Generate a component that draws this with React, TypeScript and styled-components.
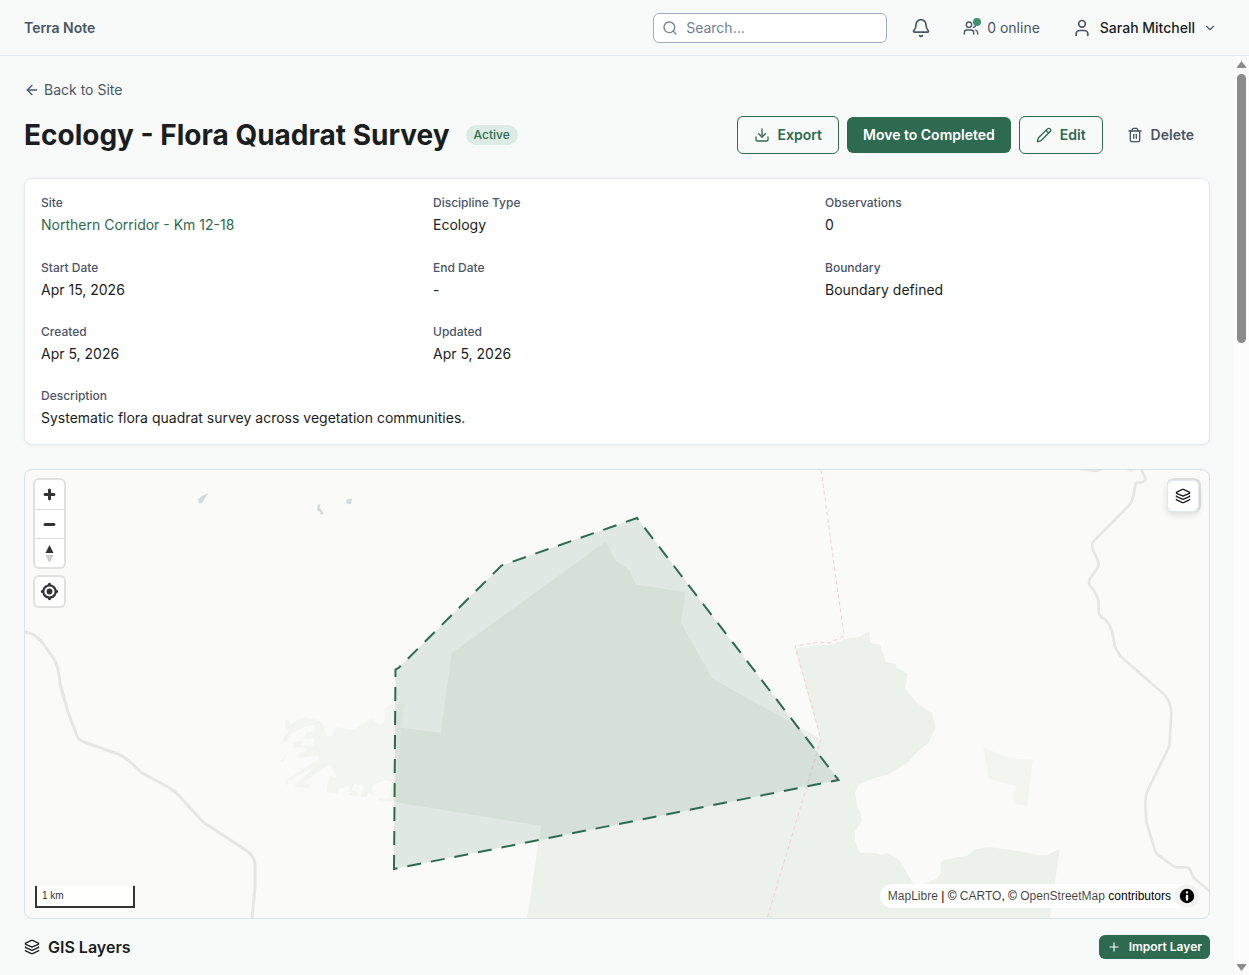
import React from 'react';
import styled, { createGlobalStyle, css } from 'styled-components';
import {
  ArrowLeft,
  Bell,
  ChevronDown,
  Download,
  Layers,
  Pencil,
  Plus,
  Search,
  Trash2,
  User,
  Users,
} from 'lucide-react';

const color = {
  page: '#f8faf9',
  surface: '#ffffff',
  border: '#e2e8f0',
  ink: '#1a1d21',
  muted: '#4a5568',
  faint: '#718096',
  green: '#2d6a4f',
  greenSoft: '#dcebe3',
  online: '#40916c',
  control: '#333333',
};

const GlobalStyle = createGlobalStyle`
  *, *::before, *::after { box-sizing: border-box; }
  body {
    margin: 0;
    background: ${color.page};
    color: ${color.ink};
    font-family: Inter, "Liberation Sans", sans-serif;
    font-size: 14px;
    line-height: 20px;
  }
  button, input { font: inherit; }
  h1, h2, dl, dd { margin: 0; }
  svg { display: block; flex-shrink: 0; }
`;

const Shell = styled.div`
  display: flex;
  flex-direction: column;
  height: 100vh;
`;

const TopBar = styled.header`
  display: flex;
  align-items: center;
  justify-content: space-between;
  flex-shrink: 0;
  height: 56px;
  padding: 0 24px;
  border-bottom: 1px solid ${color.border};
`;

const Brand = styled.span`
  color: ${color.muted};
  font-weight: 600;
`;

const TopTools = styled.div`
  display: flex;
  align-items: center;
  gap: 16px;
`;

const SearchField = styled.label`
  display: flex;
  align-items: center;
  gap: 8px;
  width: 234px;
  height: 30px;
  padding: 0 8px;
  border: 1px solid #a0aec0;
  border-radius: 6px;
  background: ${color.surface};
  color: ${color.faint};
`;

const SearchInput = styled.input`
  flex: 1;
  min-width: 0;
  padding: 0;
  border: 0;
  outline: 0;
  background: transparent;
  color: ${color.ink};
  &::placeholder { color: ${color.faint}; opacity: 1; }
`;

const BarButton = styled.button<{ $strong?: boolean }>`
  display: flex;
  align-items: center;
  gap: 8px;
  padding: 8px;
  border: 0;
  background: transparent;
  color: ${(p) => (p.$strong ? color.ink : color.muted)};
  font-weight: ${(p) => (p.$strong ? 500 : 400)};
  cursor: pointer;
  svg { color: ${color.muted}; }
`;

const PresenceIcon = styled.span`
  position: relative;
`;

const PresenceDot = styled.span`
  position: absolute;
  top: -2px;
  right: -2px;
  width: 8px;
  height: 8px;
  border-radius: 50%;
  background: ${color.online};
`;

const Body = styled.div`
  display: flex;
  flex: 1;
  min-height: 0;
`;

const Content = styled.main`
  flex: 1;
  min-width: 0;
  padding: 24px;
  overflow-y: auto;
  scrollbar-width: none;
`;

const ScrollTrack = styled.div`
  display: flex;
  flex-direction: column;
  align-items: center;
  width: 15px;
  padding: 5px 0 4px;
  background: #fcfcfc;
`;

const ScrollThumb = styled.div`
  width: 9px;
  height: 269px;
  margin: 5px 0 auto;
  border-radius: 5px;
  background: #8b8b8b;
`;

const BackLink = styled.a`
  display: inline-flex;
  align-items: center;
  gap: 4px;
  color: ${color.muted};
  text-decoration: none;
  vertical-align: top;
`;

const TitleRow = styled.div`
  display: flex;
  align-items: center;
  justify-content: space-between;
  margin: 16px 0 24px;
`;

const TitleGroup = styled.div`
  display: flex;
  align-items: center;
  gap: 16px;
`;

const Title = styled.h1`
  font-size: 28px;
  line-height: 36px;
  font-weight: 700;
`;

const Badge = styled.span`
  padding: 0 8px;
  border-radius: 10px;
  background: ${color.greenSoft};
  color: ${color.green};
  font-size: 12px;
  font-weight: 500;
`;

const Actions = styled.div`
  display: flex;
  align-items: center;
  gap: 8px;
`;

const variants = {
  outline: css`
    border: 1px solid ${color.green};
    background: transparent;
    color: ${color.green};
  `,
  solid: css`
    border: 0;
    background: ${color.green};
    color: #ffffff;
  `,
  ghost: css`
    border: 0;
    background: transparent;
    color: ${color.muted};
  `,
};

const Button = styled.button<{ $variant: keyof typeof variants; $small?: boolean }>`
  display: inline-flex;
  align-items: center;
  gap: 8px;
  padding: ${(p) => (p.$small ? '2px 8px' : '8px 16px')};
  border-radius: 6px;
  font-size: ${(p) => (p.$small ? 12 : 14)}px;
  font-weight: 600;
  white-space: nowrap;
  cursor: pointer;
  ${(p) => variants[p.$variant]}
`;

const Card = styled.section`
  padding: 16px;
  border: 1px solid ${color.border};
  border-radius: 8px;
  background: ${color.surface};
  box-shadow: 0 1px 3px rgba(0, 0, 0, 0.06);
`;

const Facts = styled.dl`
  display: grid;
  grid-template-columns: repeat(3, 1fr);
  grid-template-rows: 41px 40px 40px;
  gap: 24px;
`;

const Description = styled.dl`
  padding-top: 24px;
`;

const FactLabel = styled.dt`
  margin-bottom: 4px;
  color: ${color.muted};
  font-size: 12px;
  line-height: 16px;
  font-weight: 500;
`;

const FactLink = styled.a`
  color: ${color.green};
  text-decoration: none;
`;

const MapFrame = styled.section`
  position: relative;
  height: 450px;
  margin: 24px 0 16px;
  border: 1px solid #d9e2ec;
  border-radius: 8px;
  background: #fafaf8;
  overflow: hidden;
`;

const MapDrawing = styled.svg`
  width: 100%;
  height: 100%;
`;

const MapTools = styled.div`
  position: absolute;
  top: 10px;
  left: 10px;
  display: flex;
  flex-direction: column;
  gap: 10px;
`;

const ToolGroup = styled.div`
  border-radius: 4px;
  background: ${color.surface};
  box-shadow: 0 0 0 2px rgba(0, 0, 0, 0.1);
`;

const ToolButton = styled.button`
  display: flex;
  width: 29px;
  height: 29px;
  padding: 0;
  border: 0;
  background: transparent;
  cursor: pointer;
  & + & { border-top: 1px solid #dddddd; }
`;

const LayerToggle = styled.button`
  position: absolute;
  top: 10px;
  right: 10px;
  display: flex;
  align-items: center;
  justify-content: center;
  width: 32px;
  height: 32px;
  padding: 0;
  border: 1px solid ${color.border};
  border-radius: 6px;
  background: ${color.surface};
  color: ${color.ink};
  box-shadow: 1px -1px 0 1px rgba(0, 0, 0, 0.1), 0 3px 6px rgba(0, 0, 0, 0.12);
  cursor: pointer;
`;

const ScaleBar = styled.div`
  position: absolute;
  left: 10px;
  bottom: 10px;
  width: 100px;
  padding: 0 5px;
  border: 2px solid ${color.control};
  border-top: 0;
  background: rgba(255, 255, 255, 0.75);
  color: ${color.control};
  font: 10px/20px "Liberation Sans", sans-serif;
`;

const Attribution = styled.div`
  position: absolute;
  right: 10px;
  bottom: 10px;
  display: flex;
  align-items: center;
  gap: 4px;
  padding-left: 8px;
  border-radius: 12px;
  background: ${color.surface};
  color: #000000;
  font: 12px/20px "Liberation Sans", sans-serif;
  a { color: rgba(0, 0, 0, 0.75); text-decoration: none; }
`;

const InfoButton = styled.button`
  width: 24px;
  height: 24px;
  padding: 0;
  border: 0;
  border-radius: 12px;
  background: rgba(0, 0, 0, 0.05);
  cursor: pointer;
`;

const SectionHead = styled.div`
  display: flex;
  align-items: center;
  justify-content: space-between;
`;

const SectionTitle = styled.h2`
  display: flex;
  align-items: center;
  gap: 8px;
  font-size: 16px;
  line-height: 24px;
  font-weight: 600;
`;

const facts = [
  { label: 'Site', value: 'Northern Corridor - Km 12-18', link: true },
  { label: 'Discipline Type', value: 'Ecology' },
  { label: 'Observations', value: '0' },
  { label: 'Start Date', value: 'Apr 15, 2026' },
  { label: 'End Date', value: '-' },
  { label: 'Boundary', value: 'Boundary defined' },
  { label: 'Created', value: 'Apr 5, 2026' },
  { label: 'Updated', value: 'Apr 5, 2026' },
];

function SurveyMap() {
  return (
    <MapDrawing viewBox="25 470 1184 448" preserveAspectRatio="xMidYMid slice" aria-hidden="true">
      {/* Scrub */}
      <g fill="#f3f5f1">
        <path
          transform="translate(270 500) scale(0.33333)"
          fillRule="evenodd"
          d="M45 657 60 664 60 674 80 660 108 651 155 665 173 708 187 708 196 681 250 690 290 662 307 657 325 674 342 668 345 645 342 628 360 614 404 610 393 683 372 907 325 900 326 893 358 896 366 845 345 841 310 855 303 868 320 887 295 880 287 893 270 889 278 870 279 853 264 855 253 848 246 868 264 880 264 889 232 884 245 875 235 857 207 868 204 881 169 875 177 827 200 832 182 791 96 850 122 853 118 864 72 860 130 803 55 842 54 856 47 852 52 836 150 776 142 766 85 775 79 765 108 752 102 742 66 744 48 762 42 784 31 785 52 756 72 740 68 728 97 722 92 736 132 738 132 711 112 718 100 714 110 697 134 694 130 675 105 680 66 700 52 722 37 727 41 711 55 695 47 682Z"
        />
        <path d="M983.3 747 1007.7 758 1032.7 760 1027 806 1015.7 803.7 1013 797 1016.3 786 988.7 778.5Z" />
      </g>

      {/* Reserve */}
      <path
        fill="#ecf1eb"
        d="M606 541.3 615 560 629.3 570 636 584.5 685.3 592.3 681 622.3 712.3 678.7 820 738.5 795 648.5 820 644.7 830 645 846.7 638.5 858 637.5 869.5 631 870 643 880 644.5 885.7 662 895.7 664 896 667.5 908 674 905 688 917 703.3 932 713 935.7 727 929 742.3 918.3 750.7 907.3 763 887.3 775 876.7 777.3 859 784 855 792.3 857.3 807.3 860.7 812.7 862 820 855 831.3 855 840 858.3 850 861 852.7 875.7 853 881.7 854.7 888.3 853.3 899.3 860 913.3 884 917 890 925.3 883.3 935 879.3 941.3 873.3 940.7 864.3 943.3 859.7 967.3 855.7 975 849.3 989.3 847 1010 849.7 1036.7 854.7 1046.7 855.3 1060 848.7 1049.3 919 527 919 541 825.7 394 802 401 727.7 440.7 732.7 451.7 653.3Z"
      />

      {/* Lakes */}
      <g fill="#d5dadc" transform="translate(20 465) scale(0.33333)">
        <path d="M533 103 548 92 564 85 556 98 545 115 538 115Z" />
        <path d="M893 120 902 117 899 128 908 140 911 147 902 149 901 142 891 135Z" />
        <path d="M980 105 985 101 996 102 993 117 984 118 978 110Z" />
      </g>

      {/* Roads */}
      <g fill="none" stroke="#e6e6e6" strokeWidth="3" strokeLinejoin="round">
        <path d="M25 632Q34 633 42 642L52 656Q59 664 60 684L68 712 77 736Q79 741 84 742L118 754Q124 756 129 761L142 773 170 788Q176 792 181 798L203 822 247 851Q254 856 255 864V887L252 919" />
        <path
          transform="translate(1040 465) scale(0.33333)"
          strokeWidth="8"
          d="M303 12 314 34Q320 49 306 52L292 53Q287 53 286 60L279 98Q276 110 265 123L160 230Q153 238 160 256L173 286Q180 298 171 311L152 338Q141 352 152 364L164 380Q176 400 176 420V440Q176 450 186 458L196 464Q214 480 219 515L225 545 240 572 372 688Q393 710 394 745L389 830Q389 840 384 852L325 972Q316 990 316 1020L319 1070 344 1155Q346 1162 352 1168L398 1202Q404 1207 412 1207H440Q447 1207 450 1214L459 1234Q461 1238 466 1243L508 1278M115 10 165 18 192 10M258 10 271 16 288 10"
        />
      </g>

      {/* Administrative boundary */}
      <g fill="none" stroke="#ecd4d5" strokeDasharray="4 3">
        <path d="M821 470 844 636 829 643 820 642 795 646 821 739 767 919" />
      </g>

      {/* Survey boundary */}
      <path
        fill="#2d6a4f"
        fillOpacity="0.12"
        stroke="#2d6a4f"
        strokeWidth="2"
        strokeDasharray="14 10"
        d="M394 869 395.500 669.500 398.500 668 501.500 565.500 637 518 838.500 780Z"
      />
    </MapDrawing>
  );
}

export default function App() {
  return (
    <>
      <GlobalStyle />
      <Shell>
        <TopBar>
          <Brand>Terra Note</Brand>
          <TopTools>
            <SearchField>
              <Search size={16} />
              <SearchInput type="search" placeholder="Search..." aria-label="Search" />
            </SearchField>
            <BarButton type="button" aria-label="Notifications">
              <Bell size={20} />
            </BarButton>
            <BarButton type="button">
              <PresenceIcon>
                <Users size={16} />
                <PresenceDot />
              </PresenceIcon>
              0 online
            </BarButton>
            <BarButton type="button" $strong>
              <User size={20} />
              Sarah Mitchell
              <ChevronDown size={14} />
            </BarButton>
          </TopTools>
        </TopBar>

        <Body>
          <Content>
            <BackLink href="#site">
              <ArrowLeft size={16} />
              Back to Site
            </BackLink>

            <TitleRow>
              <TitleGroup>
                <Title>Ecology - Flora Quadrat Survey</Title>
                <Badge>Active</Badge>
              </TitleGroup>
              <Actions>
                <Button type="button" $variant="outline">
                  <Download size={16} />
                  Export
                </Button>
                <Button type="button" $variant="solid">Move to Completed</Button>
                <Button type="button" $variant="outline">
                  <Pencil size={16} />
                  Edit
                </Button>
                <Button type="button" $variant="ghost">
                  <Trash2 size={16} />
                  Delete
                </Button>
              </Actions>
            </TitleRow>

            <Card>
              <Facts>
                {facts.map((fact) => (
                  <div key={fact.label}>
                    <FactLabel>{fact.label}</FactLabel>
                    <dd>{fact.link ? <FactLink href="#site">{fact.value}</FactLink> : fact.value}</dd>
                  </div>
                ))}
              </Facts>
              <Description>
                <FactLabel>Description</FactLabel>
                <dd>Systematic flora quadrat survey across vegetation communities.</dd>
              </Description>
            </Card>

            <MapFrame aria-label="Survey map">
              <SurveyMap />
              <MapTools>
                <ToolGroup>
                  <ToolButton type="button" aria-label="Zoom in">
                    <svg width="29" height="29" viewBox="0 0 29 29" fill="#333">
                      <path d="M14.5 8.5c-.75 0-1.5.75-1.5 1.5v3h-3c-.75 0-1.5.75-1.5 1.5S9.25 16 10 16h3v3c0 .75.75 1.5 1.5 1.5S16 19.75 16 19v-3h3c.75 0 1.5-.75 1.5-1.5S19.75 13 19 13h-3v-3c0-.75-.75-1.5-1.5-1.5z" />
                    </svg>
                  </ToolButton>
                  <ToolButton type="button" aria-label="Zoom out">
                    <svg width="29" height="29" viewBox="0 0 29 29" fill="#333">
                      <path d="M10 13c-.75 0-1.5.75-1.5 1.5S9.25 16 10 16h9c.75 0 1.5-.75 1.5-1.5S19.75 13 19 13h-9z" />
                    </svg>
                  </ToolButton>
                  <ToolButton type="button" aria-label="Reset bearing to north">
                    <svg width="29" height="29" viewBox="0 0 29 29" fill="#333">
                      <path d="m10.5 14 4-8 4 8z" />
                      <path fill="#ccc" d="m10.5 16 4 8 4-8z" />
                    </svg>
                  </ToolButton>
                </ToolGroup>
                <ToolGroup>
                  <ToolButton type="button" aria-label="Find my location">
                    <svg width="29" height="29" viewBox="0 0 20 20" fill="#333">
                      <path d="M10 4C9 4 9 5 9 5v.1A5 5 0 0 0 5.100 9H5s-1 0-1 1 1 1 1 1h.1A5 5 0 0 0 9 14.900v.1s0 1 1 1 1-1 1-1v-.1a5 5 0 0 0 3.900-3.900h.1s1 0 1-1-1-1-1-1h-.1A5 5 0 0 0 11 5.100V5s0-1-1-1m0 2.500a3.500 3.500 0 1 1 0 7 3.500 3.500 0 1 1 0-7" />
                      <circle cx="10" cy="10" r="2" />
                    </svg>
                  </ToolButton>
                </ToolGroup>
              </MapTools>
              <LayerToggle type="button" aria-label="Map layers">
                <Layers size={16} />
              </LayerToggle>
              <ScaleBar>1 km</ScaleBar>
              <Attribution>
                <span>
                  <a href="#maplibre">MapLibre</a> | © <a href="#carto">CARTO</a>, ©{' '}
                  <a href="#osm">OpenStreetMap</a> contributors
                </span>
                <InfoButton type="button" aria-label="Toggle attribution">
                  <svg width="24" height="24" viewBox="0 0 20 20" fillRule="evenodd">
                    <path d="M4 10a6 6 0 1 0 12 0 6 6 0 1 0-12 0m5-3a1 1 0 1 0 2 0 1 1 0 1 0-2 0m0 3a1 1 0 1 1 2 0v3a1 1 0 1 1-2 0" />
                  </svg>
                </InfoButton>
              </Attribution>
            </MapFrame>

            <SectionHead>
              <SectionTitle>
                <Layers size={16} />
                GIS Layers
              </SectionTitle>
              <Button type="button" $variant="solid" $small>
                <Plus size={14} />
                Import Layer
              </Button>
            </SectionHead>
          </Content>

          <ScrollTrack aria-hidden="true">
            <svg width="9" height="8" viewBox="0 0 9 8" fill="#8b8b8b">
              <path d="M4.500 0 9 6v1H0V6z" />
            </svg>
            <ScrollThumb />
            <svg width="9" height="7" viewBox="0 0 9 7" fill="#8b8b8b">
              <path d="M4.500 7 9 1V0H0v1z" />
            </svg>
          </ScrollTrack>
        </Body>
      </Shell>
    </>
  );
}
